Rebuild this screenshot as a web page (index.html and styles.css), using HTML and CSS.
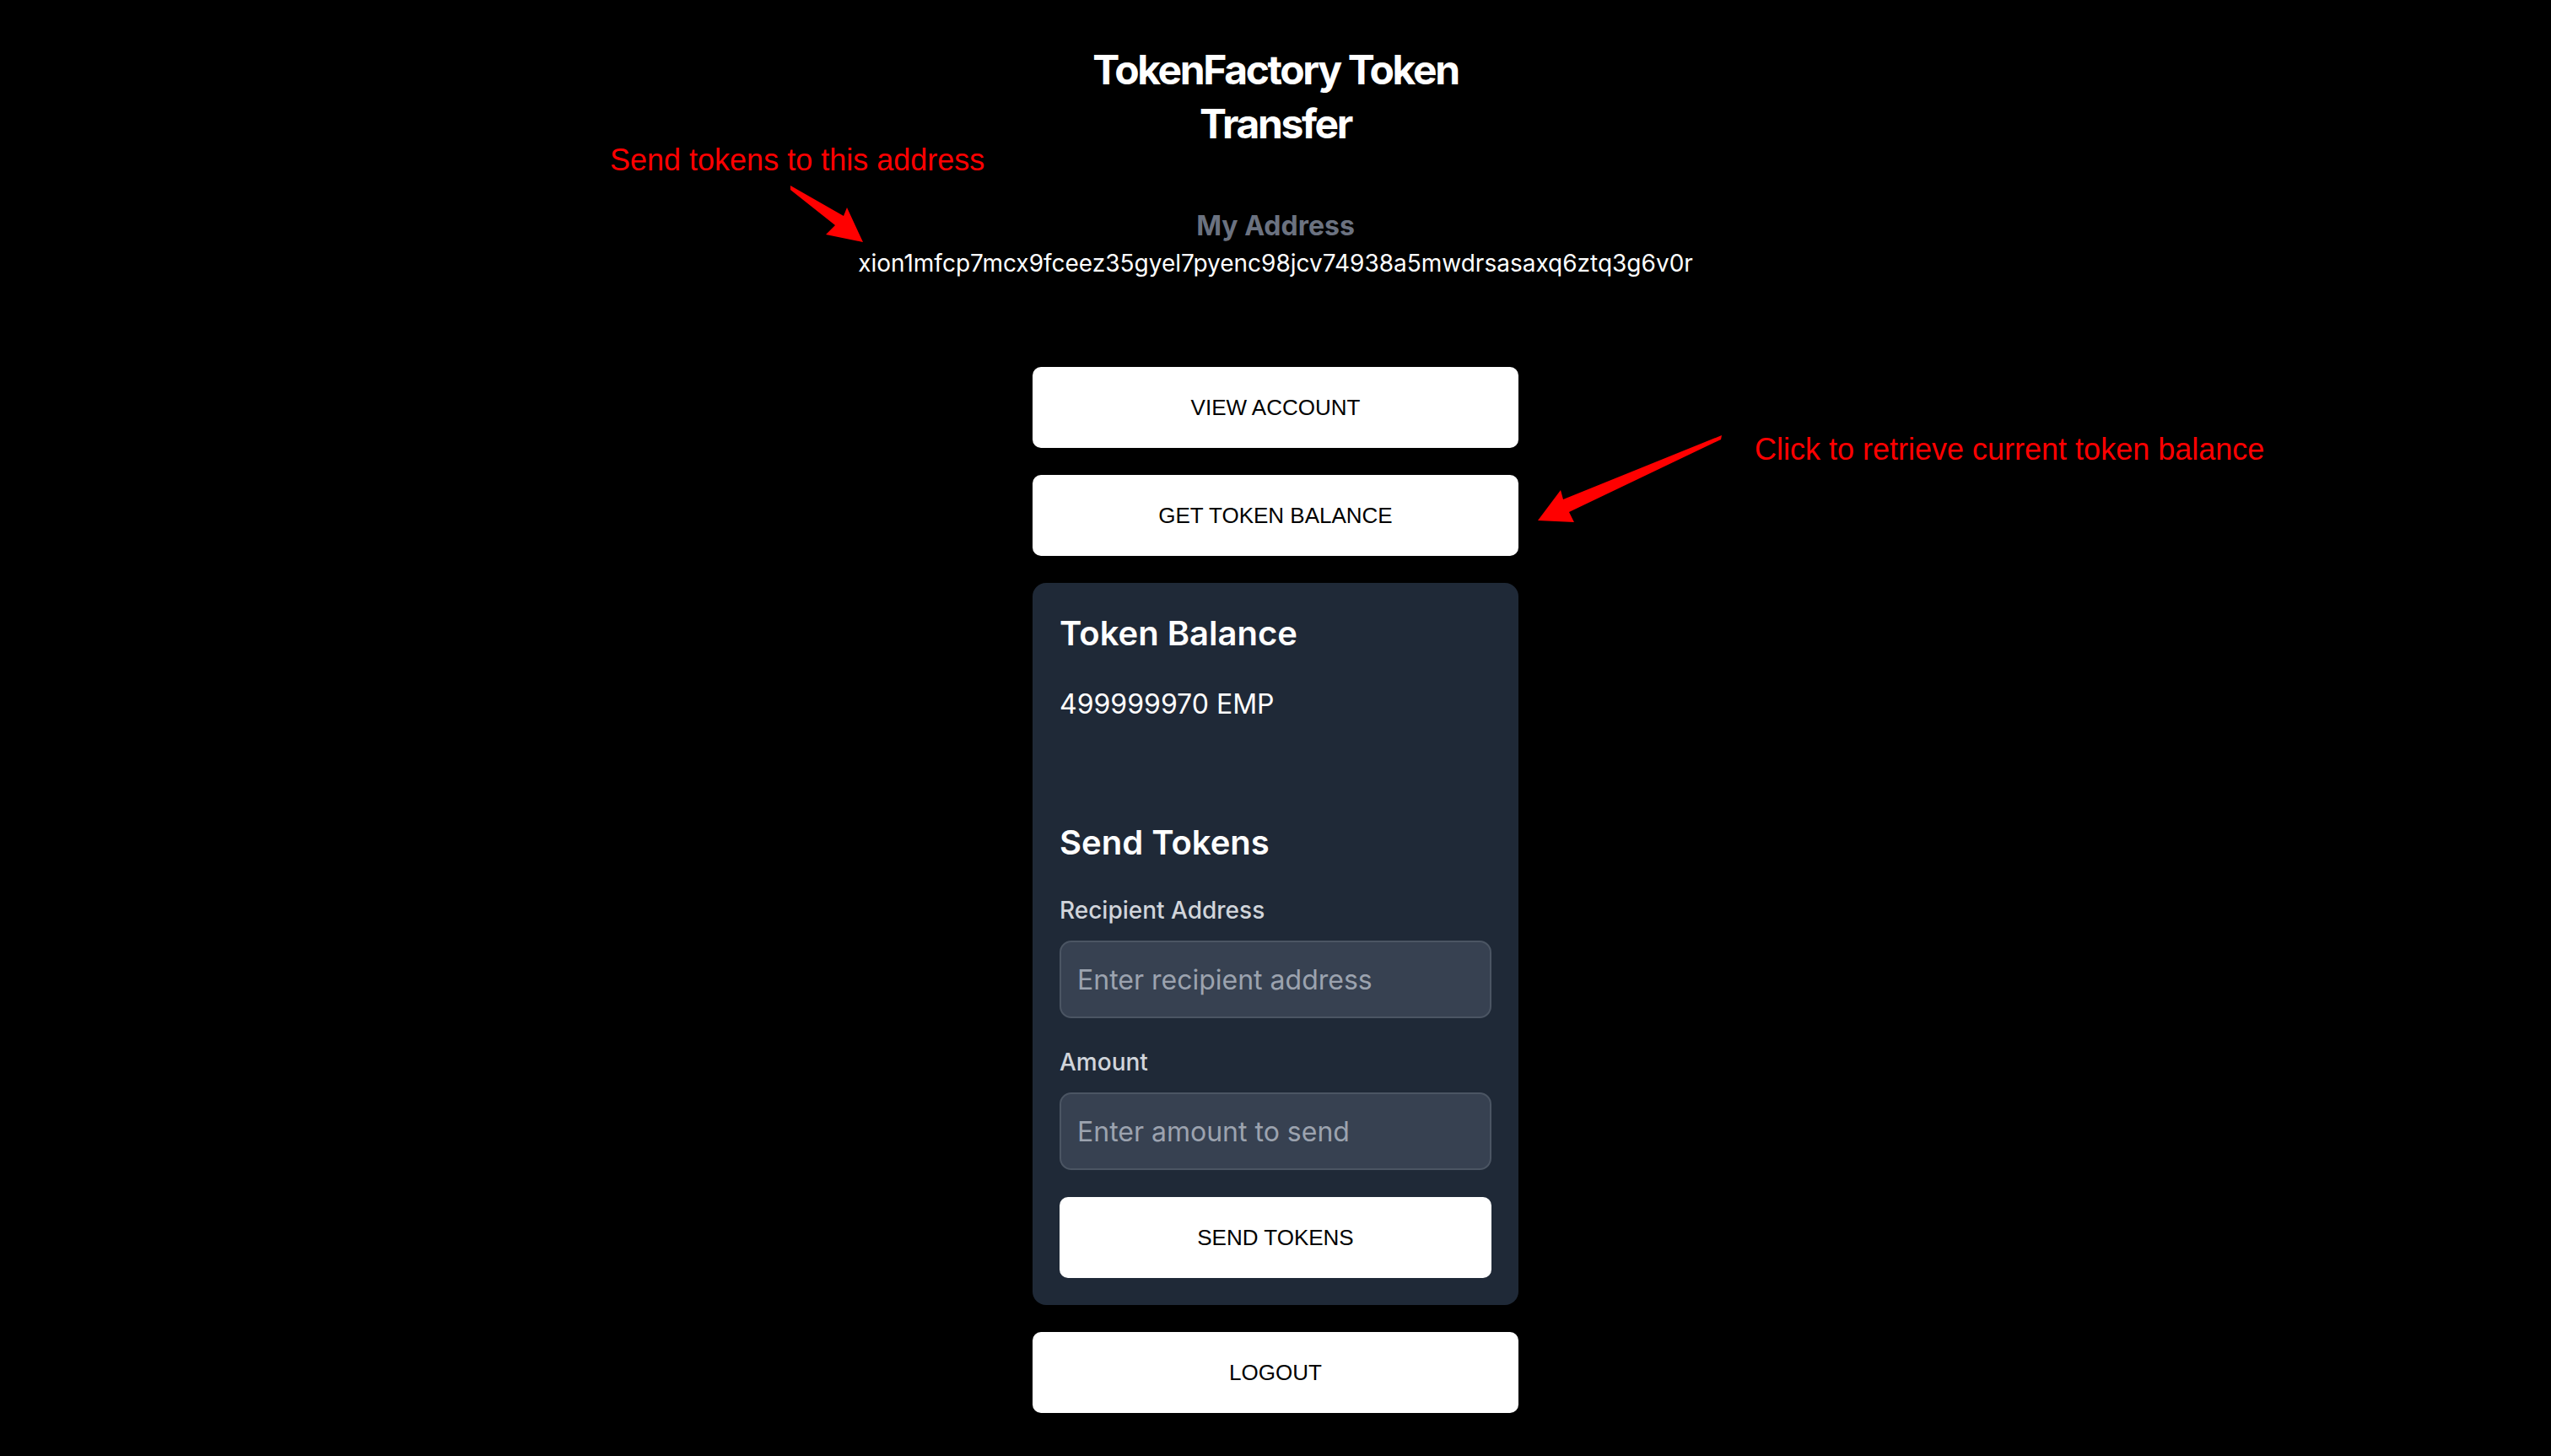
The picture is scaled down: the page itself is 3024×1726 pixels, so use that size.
FILE: index.html
```html
<!DOCTYPE html>
<html lang="en">
<head>
<meta charset="utf-8">
<title>TokenFactory Token Transfer</title>
<link rel="stylesheet" href="styles.css">
</head>
<body>
<main class="page">
  <h1 class="title">TokenFactory Token Transfer</h1>
  <section class="address-block">
    <h2 class="address-label">My Address</h2>
    <p class="address">xion1mfcp7mcx9fceez35gyel7pyenc98jcv74938a5mwdrsasaxq6ztq3g6v0r</p>
  </section>
  <div class="actions">
    <button class="btn">VIEW ACCOUNT</button>
    <button class="btn">GET TOKEN BALANCE</button>
    <section class="card">
      <h2 class="card-title">Token Balance</h2>
      <p class="balance">499999970 EMP</p>
      <div class="send">
        <h2 class="card-title">Send Tokens</h2>
        <div class="field">
          <label class="label" for="recipient">Recipient Address</label>
          <input class="input" id="recipient" type="text" placeholder="Enter recipient address">
        </div>
        <div class="field">
          <label class="label" for="amount">Amount</label>
          <input class="input" id="amount" type="text" placeholder="Enter amount to send">
        </div>
        <button class="btn">SEND TOKENS</button>
      </div>
    </section>
    <button class="btn">LOGOUT</button>
  </div>
</main>
<svg class="annotations" width="3024" height="1726" viewBox="0 0 3024 1726" xmlns="http://www.w3.org/2000/svg">
  <text class="note" x="723" y="202">Send tokens to this address</text>
  <polygon class="arrow" points="937,220 1000,256 1004,246 1023,287 979,278 990,267 937,225"/>
  <text class="note" x="2080" y="545">Click to retrieve current token balance</text>
  <polygon class="arrow" points="2041,516 1853,592 1850,581 1823,617 1866,619 1860,607 2040,521"/>
</svg>
</body>
</html>
```
FILE: styles.css
```css
html, body {
  margin: 0;
  padding: 0;
  background: #000000;
}

body {
  position: relative;
  min-height: 1726px;
  font-family: Inter, "Noto Sans", sans-serif;
  color: #ffffff;
}

.page {
  display: flex;
  flex-direction: column;
  align-items: center;
  padding-top: 51px;
}

.title {
  margin: 0 0 65px;
  max-width: 576px;
  font-size: 48px;
  line-height: 64px;
  font-weight: 700;
  letter-spacing: -2.4px;
  text-align: center;
}

.address-block {
  display: flex;
  flex-direction: column;
  align-items: center;
  margin-bottom: 103px;
}

.address-label {
  margin: 0;
  font-size: 32px;
  line-height: 48px;
  font-weight: 700;
  color: #6b7280;
}

.address {
  margin: 0;
  font-size: 28px;
  line-height: 40px;
  color: #ffffff;
}

.actions {
  width: 576px;
  display: flex;
  flex-direction: column;
  gap: 32px;
}

.btn {
  display: flex;
  align-items: center;
  justify-content: center;
  width: 100%;
  height: 96px;
  padding: 0;
  border: none;
  border-radius: 10px;
  background: #ffffff;
  color: #000000;
  font-family: "Liberation Sans", Arial, sans-serif;
  font-size: 26px;
}

.card {
  background: #1f2937;
  border-radius: 16px;
  padding: 32px;
}

.card-title {
  margin: 0 0 32px;
  font-size: 40px;
  line-height: 56px;
  font-weight: 600;
  color: #ffffff;
}

.balance {
  margin: 0;
  font-size: 32px;
  line-height: 48px;
}

.send {
  margin-top: 112px;
}

.field {
  margin-bottom: 32px;
}

.label {
  display: block;
  margin-bottom: 16px;
  font-size: 28px;
  line-height: 40px;
  font-weight: 500;
  color: #d1d5db;
}

.input {
  display: block;
  box-sizing: border-box;
  width: 100%;
  height: 92px;
  padding: 0 19px;
  background: #374151;
  border: 2px solid #4b5563;
  border-radius: 14px;
  color: #ffffff;
  font-family: Inter, "Noto Sans", sans-serif;
  font-size: 32px;
  outline: none;
}

.input::placeholder {
  color: #9ca3af;
}

.annotations {
  position: absolute;
  top: 0;
  left: 0;
  pointer-events: none;
}

.note {
  font-family: "Liberation Sans", Arial, sans-serif;
  font-size: 36px;
  fill: #ff0000;
}

.arrow {
  fill: #ff0000;
}
```
